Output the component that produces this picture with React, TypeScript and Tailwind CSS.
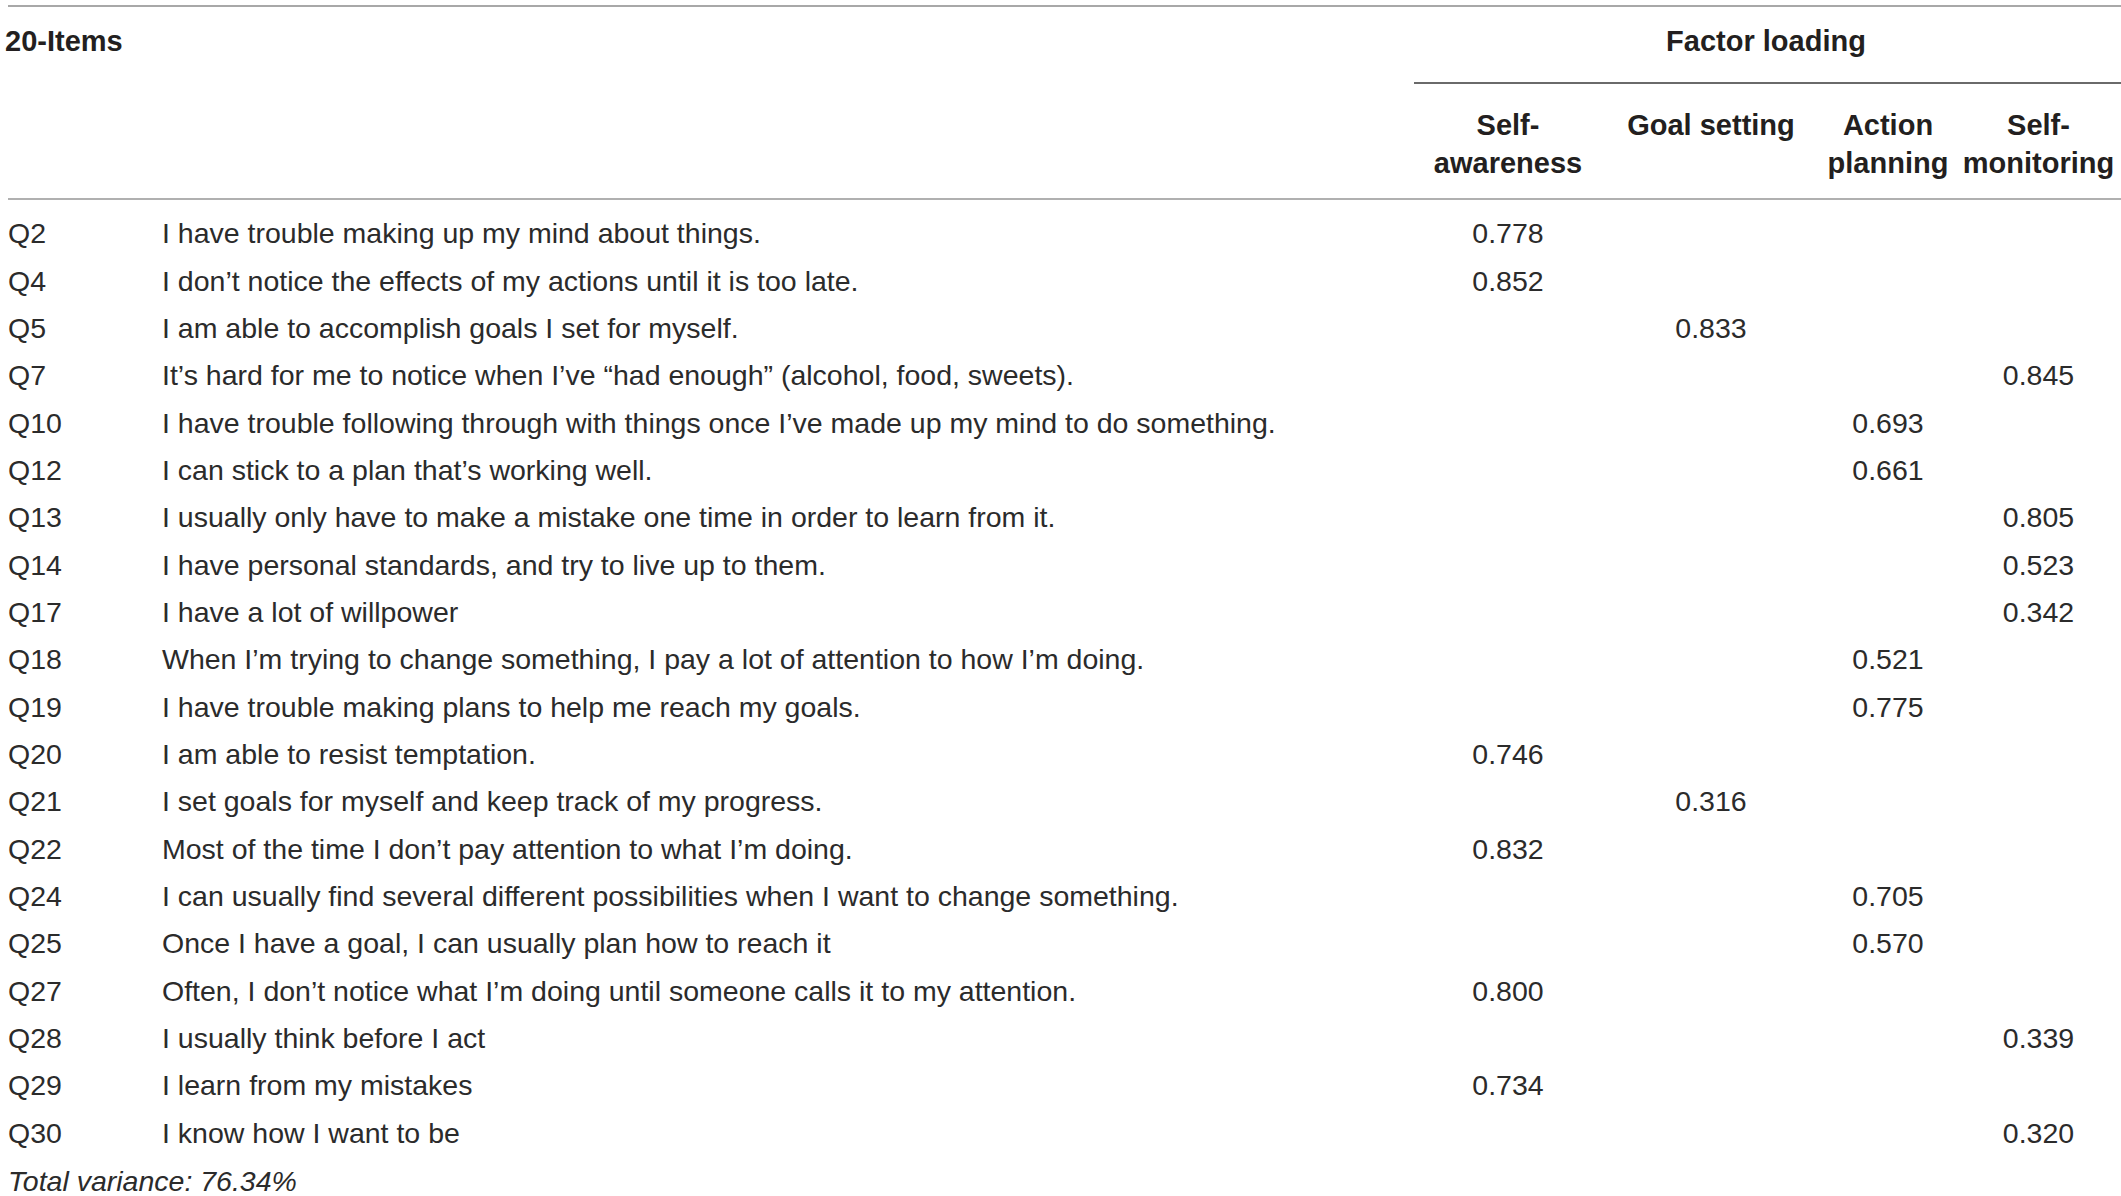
import React from 'react';

type Row = { q: string; text: string; col: number; value: string };

const rows: Row[] = [
  { q: 'Q2', text: 'I have trouble making up my mind about things.', col: 0, value: '0.778' },
  { q: 'Q4', text: 'I don’t notice the effects of my actions until it is too late.', col: 0, value: '0.852' },
  { q: 'Q5', text: 'I am able to accomplish goals I set for myself.', col: 1, value: '0.833' },
  { q: 'Q7', text: 'It’s hard for me to notice when I’ve “had enough” (alcohol, food, sweets).', col: 3, value: '0.845' },
  { q: 'Q10', text: 'I have trouble following through with things once I’ve made up my mind to do something.', col: 2, value: '0.693' },
  { q: 'Q12', text: 'I can stick to a plan that’s working well.', col: 2, value: '0.661' },
  { q: 'Q13', text: 'I usually only have to make a mistake one time in order to learn from it.', col: 3, value: '0.805' },
  { q: 'Q14', text: 'I have personal standards, and try to live up to them.', col: 3, value: '0.523' },
  { q: 'Q17', text: 'I have a lot of willpower', col: 3, value: '0.342' },
  { q: 'Q18', text: 'When I’m trying to change something, I pay a lot of attention to how I’m doing.', col: 2, value: '0.521' },
  { q: 'Q19', text: 'I have trouble making plans to help me reach my goals.', col: 2, value: '0.775' },
  { q: 'Q20', text: 'I am able to resist temptation.', col: 0, value: '0.746' },
  { q: 'Q21', text: 'I set goals for myself and keep track of my progress.', col: 1, value: '0.316' },
  { q: 'Q22', text: 'Most of the time I don’t pay attention to what I’m doing.', col: 0, value: '0.832' },
  { q: 'Q24', text: 'I can usually find several different possibilities when I want to change something.', col: 2, value: '0.705' },
  { q: 'Q25', text: 'Once I have a goal, I can usually plan how to reach it', col: 2, value: '0.570' },
  { q: 'Q27', text: 'Often, I don’t notice what I’m doing until someone calls it to my attention.', col: 0, value: '0.800' },
  { q: 'Q28', text: 'I usually think before I act', col: 3, value: '0.339' },
  { q: 'Q29', text: 'I learn from my mistakes', col: 0, value: '0.734' },
  { q: 'Q30', text: 'I know how I want to be', col: 3, value: '0.320' },
];

const colWidths = ['w-[188px]', 'w-[218px]', 'w-[136px]', 'w-[165px]'];

export default function App() {
  return (
    <div className="w-[2121px] h-[1196px] bg-white pl-[8px] pt-[5px] text-[28.5px] text-[#231f20] font-['Liberation_Sans',Arial,sans-serif] overflow-hidden">
      <div className="border-t-2 border-[#a8a8a8]" />

      {/* header */}
      <div className="flex h-[75px] font-bold text-[29px]">
        <div className="w-[1406px] pt-[15px] -ml-[3px] leading-[38px]">20-Items</div>
        <div className="flex flex-col flex-1">
          <div className="pt-[15px] leading-[38px] text-center">Factor loading</div>
        </div>
      </div>
      <div className="flex">
        <div className="w-[1406px]" />
        <div className="flex-1 border-t-2 border-[#6a6a6a]" />
      </div>
      <div className="flex h-[114px] font-bold text-[29px] leading-[38px] pt-[22px]">
        <div className="w-[1406px]" />
        <div className={`${colWidths[0]} text-center`}>Self-<br />awareness</div>
        <div className={`${colWidths[1]} text-center`}>Goal setting</div>
        <div className={`${colWidths[2]} text-center`}>Action<br />planning</div>
        <div className={`${colWidths[3]} text-center`}>Self-<br />monitoring</div>
      </div>
      <div className="border-t-2 border-[#b0b0b0]" />

      {/* body */}
      <div className="pt-[10px]">
        {rows.map((r) => (
          <div key={r.q} className="flex items-center h-[47.35px] text-[#2b2b2b]">
            <div className="w-[154px]">{r.q}</div>
            <div className="w-[1252px] whitespace-nowrap">{r.text}</div>
            {colWidths.map((w, i) => (
              <div key={i} className={`${w} text-center`}>
                {i === r.col ? r.value : ''}
              </div>
            ))}
          </div>
        ))}
      </div>
      <div className="h-[48px] flex items-center italic text-[#2b2b2b]">
        Total variance: 76.34%
      </div>
    </div>
  );
}
